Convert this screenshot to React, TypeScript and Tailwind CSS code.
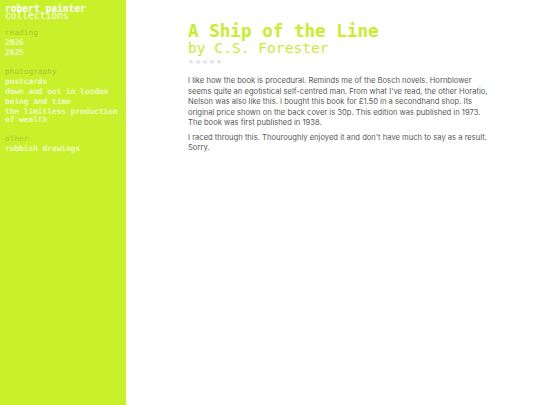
const mono = { fontFamily: '"DejaVu Sans Mono", "Liberation Mono", monospace' };

function Section({ title, items }: { title: string; items: string[] }) {
  return (
    <div className="mb-[9px]">
      <div className="text-[#a6c92c] text-[7.8px] leading-[10px]">{title}</div>
      {items.map((it) => (
        <div key={it} className="text-white text-[7.8px] leading-[8px] py-[1px]">
          {it}
        </div>
      ))}
    </div>
  );
}

export default function App() {
  return (
    <div className="flex w-full h-[405px] bg-white">
      <aside className="w-[126px] shrink-0 bg-[#c9f12b] px-[5px] pt-[5px]" style={mono}>
        <div className="mb-[8px]">
          <div className="text-white font-bold text-[9.6px] leading-[7px]">robert painter</div>
          <div className="text-white text-[9.6px] leading-[8px]">collections</div>
        </div>
        <Section title="reading" items={["2026", "2025"]} />
        <Section
          title="photography"
          items={["postcards", "down and out in london", "being and time", "the limitless production of wealth"]}
        />
        <Section title="other" items={["rubbish drawings"]} />
      </aside>

      <main className="flex-1 pl-[62px] pt-[22px]">
        <div className="w-[300px]">
          <h1 className="text-[#c6ef2a] font-bold text-[17.6px] leading-[18px]" style={mono}>
            A Ship of the Line
          </h1>
          <h2 className="text-[#c6ef2a] text-[14.6px] leading-[15px]" style={mono}>
            by C.S. Forester
          </h2>
          <div className="flex gap-[1px] text-[#e6d6f0] text-[7px] leading-[8px] mt-[3px]">
            <span>★</span>
            <span>★</span>
            <span>★</span>
            <span>★</span>
            <span>★</span>
          </div>
          <div
            className="mt-[10px] text-[#5a5a5a] text-[7.6px] leading-[10.5px]"
            style={{ fontFamily: '"Inter", "Noto Sans", sans-serif' }}
          >
            <p className="mb-[4px]">
              I like how the book is procedural. Reminds me of the Bosch novels. Hornblower seems quite an
              egotistical self-centred man. From what I've read, the other Horatio, Nelson was also like this. I
              bought this book for £1.50 in a secondhand shop. Its original price shown on the back cover is 30p.
              This edition was published in 1973. The book was first published in 1938.
            </p>
            <p>
              I raced through this. Thouroughly enjoyed it and don't have much to say as a result. Sorry.
            </p>
          </div>
        </div>
      </main>
    </div>
  );
}
